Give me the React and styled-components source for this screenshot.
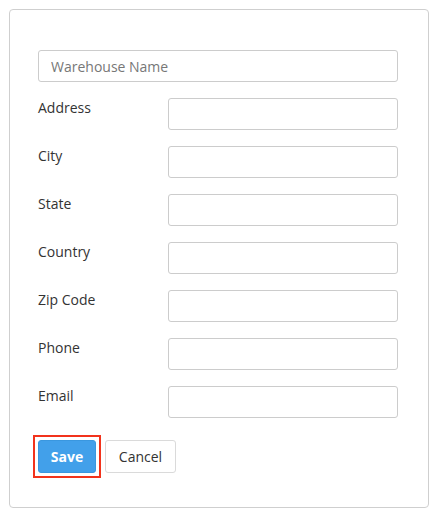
import React from 'react'
import styled, { createGlobalStyle } from 'styled-components'

const GlobalStyle = createGlobalStyle`
  body {
    margin: 0;
    background: #fff;
    font-family: "Open Sans", "Liberation Sans", sans-serif;
  }
`

const Card = styled.form`
  box-sizing: border-box;
  width: 420px;
  margin: 9px 0 0 9px;
  padding: 40px 30px 34px 28px;
  border: 1px solid #cfcfcf;
  border-radius: 4px;
  display: flex;
  flex-direction: column;
  gap: 16px;
`

const TextInput = styled.input`
  box-sizing: border-box;
  width: 100%;
  height: 32px;
  padding: 0 12px;
  border: 1px solid #cccccc;
  border-radius: 3px;
  font-family: inherit;
  font-size: 14px;
  color: #333;
  outline: none;
  &::placeholder {
    color: #777;
  }
`

const Row = styled.div`
  display: grid;
  grid-template-columns: 130px 1fr;
  align-items: start;
`

const Label = styled.label`
  font-size: 14px;
  color: #333;
  line-height: 20px;
`

const Actions = styled.div`
  display: flex;
  gap: 9px;
  margin-top: 6px;
`

const Highlight = styled.div`
  position: relative;
  display: flex;
  &::after {
    content: '';
    position: absolute;
    inset: -5px;
    border: 2px solid #f2331c;
    pointer-events: none;
  }
`

const Button = styled.button`
  box-sizing: border-box;
  height: 33px;
  width: ${p => p.$width}px;
  padding: 0;
  border-radius: 3px;
  font-family: inherit;
  font-size: 14px;
  font-weight: ${p => (p.$primary ? 700 : 400)};
  color: ${p => (p.$primary ? '#fff' : '#333')};
  background: ${p => (p.$primary ? '#42a0ea' : '#fff')};
  border: 1px solid ${p => (p.$primary ? '#3a97df' : '#dadada')};
  cursor: pointer;
`

const fields = ['Address', 'City', 'State', 'Country', 'Zip Code', 'Phone', 'Email']

export default function App() {
  return (
    <>
      <GlobalStyle />
      <Card onSubmit={e => e.preventDefault()}>
        <TextInput placeholder="Warehouse Name" />
        {fields.map(f => (
          <Row key={f}>
            <Label>{f}</Label>
            <TextInput />
          </Row>
        ))}
        <Actions>
          <Highlight>
            <Button $primary $width={58}>Save</Button>
          </Highlight>
          <Button type="button" $width={71}>Cancel</Button>
        </Actions>
      </Card>
    </>
  )
}
